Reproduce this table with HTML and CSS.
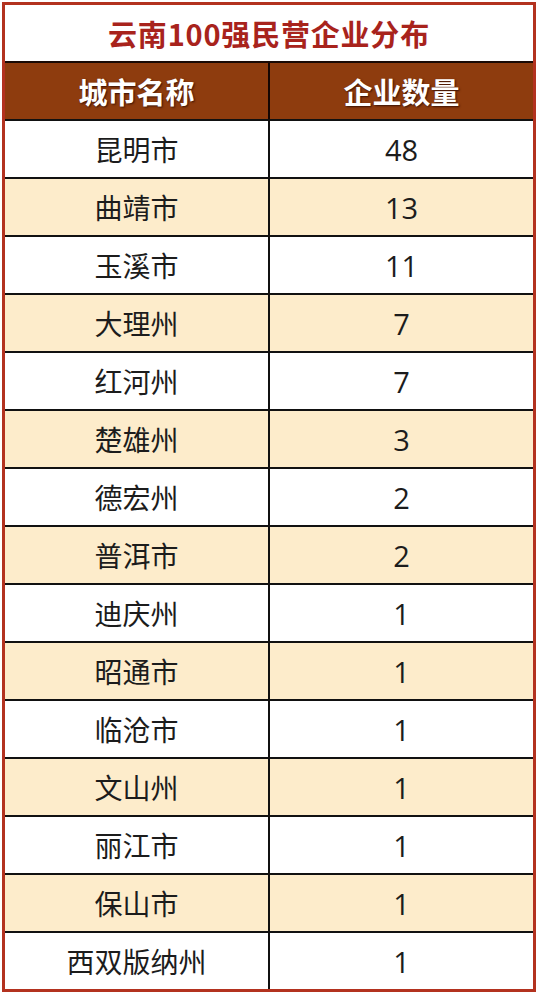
FILE: index.html
```html
<!DOCTYPE html>
<html lang="zh">
<head>
<meta charset="utf-8">
<title>云南100强民营企业分布</title>
<link rel="stylesheet" href="styles.css">
</head>
<body>
<div class="table">
  <div class="title">云南100强民营企业分布</div>
  <div class="row head"><div class="cell">城市名称</div><div class="cell">企业数量</div></div>
  <div class="row"><div class="cell">昆明市</div><div class="cell num">48</div></div>
  <div class="row alt"><div class="cell">曲靖市</div><div class="cell num">13</div></div>
  <div class="row"><div class="cell">玉溪市</div><div class="cell num">11</div></div>
  <div class="row alt"><div class="cell">大理州</div><div class="cell num">7</div></div>
  <div class="row"><div class="cell">红河州</div><div class="cell num">7</div></div>
  <div class="row alt"><div class="cell">楚雄州</div><div class="cell num">3</div></div>
  <div class="row"><div class="cell">德宏州</div><div class="cell num">2</div></div>
  <div class="row alt"><div class="cell">普洱市</div><div class="cell num">2</div></div>
  <div class="row"><div class="cell">迪庆州</div><div class="cell num">1</div></div>
  <div class="row alt"><div class="cell">昭通市</div><div class="cell num">1</div></div>
  <div class="row"><div class="cell">临沧市</div><div class="cell num">1</div></div>
  <div class="row alt"><div class="cell">文山州</div><div class="cell num">1</div></div>
  <div class="row"><div class="cell">丽江市</div><div class="cell num">1</div></div>
  <div class="row alt"><div class="cell">保山市</div><div class="cell num">1</div></div>
  <div class="row last"><div class="cell">西双版纳州</div><div class="cell num">1</div></div>
</div>
</body>
</html>
```

FILE: styles.css
```css
html, body {
  margin: 0;
  padding: 0;
  background: #ffffff;
}
body {
  padding: 2px 0 0 2px;
  font-family: "Noto Sans CJK SC", "Noto Sans", sans-serif;
}
.table {
  width: 528px;
  border: 3px solid #b3321f;
  background: #ffffff;
}
.title {
  height: 56px;
  border-bottom: 2px solid #1a0a05;
  display: flex;
  align-items: center;
  justify-content: center;
  font-size: 29px;
  font-weight: 700;
  color: #a8231c;
  letter-spacing: 0.8px;
}
.row {
  display: grid;
  grid-template-columns: 265px 1fr;
  height: 56px;
  border-bottom: 2px solid #111111;
}
.row.last {
  border-bottom: none;
}
.cell {
  display: flex;
  align-items: center;
  justify-content: center;
  font-size: 28px;
  color: #1c1c1c;
}
.cell.num {
  font-family: "Open Sans", "Noto Sans", sans-serif;
  font-size: 29px;
}
.cell:first-child {
  border-right: 2px solid #111111;
}
.row.alt {
  background: #fdeccb;
}
.row.head {
  background: #8e3c0e;
}
.row.head .cell {
  color: #ffffff;
  font-weight: 700;
  font-size: 29px;
  text-shadow: 1px 1px 2px #3a1204;
}
.row.head .cell:first-child {
  border-right-color: #150603;
}
```
